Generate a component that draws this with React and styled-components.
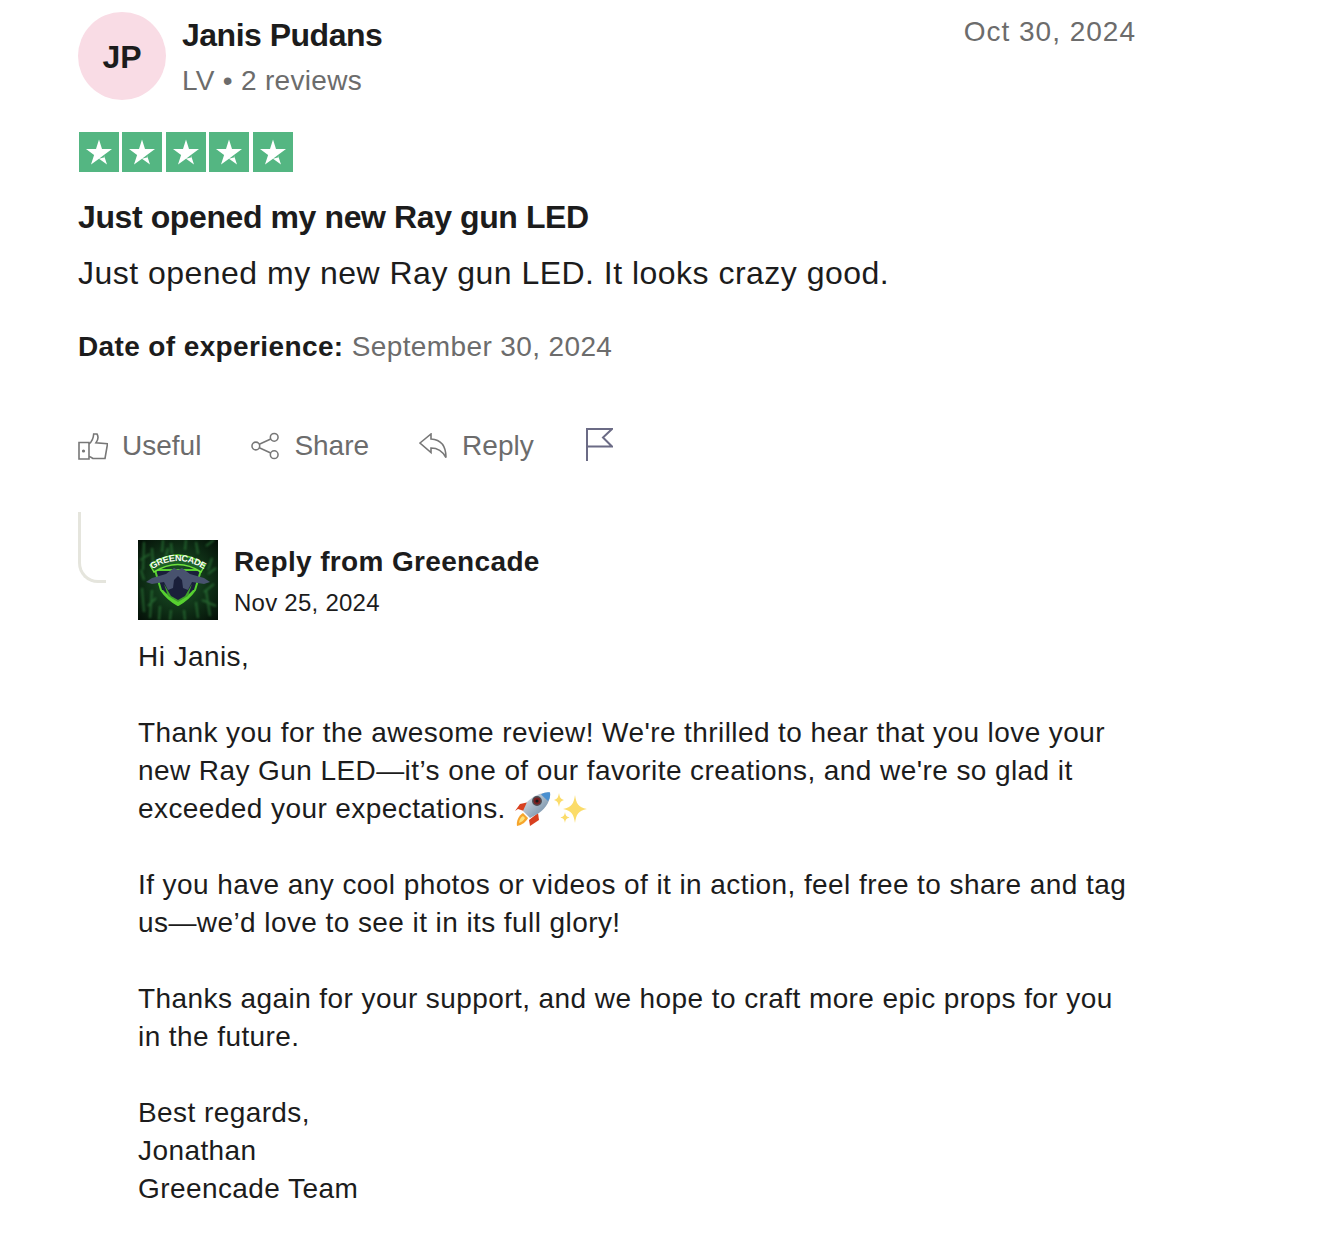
import styled, { createGlobalStyle } from "styled-components";

const GlobalStyle = createGlobalStyle`
  html, body {
    margin: 0;
    padding: 0;
    background: #fff;
    font-family: "Liberation Sans", Arial, sans-serif;
    color: #1c1c1c;
  }
`;

const Page = styled.div`
  width: 1058px;
  padding: 12px 0 0 78px;
`;

const Header = styled.header`
  display: flex;
  align-items: flex-start;
`;

const Avatar = styled.div`
  width: 88px;
  height: 86px;
  padding-top: 2px;
  border-radius: 50%;
  background: #f9dce5;
  display: flex;
  align-items: center;
  justify-content: center;
  font-size: 32px;
  font-weight: 700;
  flex-shrink: 0;
`;

const Consumer = styled.div`
  margin-left: 16px;
  flex: 1;
`;

const Name = styled.div`
  font-size: 32px;
  font-weight: 700;
  line-height: 46px;
  letter-spacing: -0.5px;
`;

const Meta = styled.div`
  font-size: 28px;
  line-height: 46px;
  letter-spacing: 0.3px;
  color: #6c6c6c;
`;

const ReviewDate = styled.div`
  font-size: 28px;
  line-height: 40px;
  letter-spacing: 1px;
  color: #6c6c6c;
`;

const Stars = styled.div`
  display: flex;
  gap: 3.4px;
  margin: 28px 0 0 1px;
`;

const StarBox = styled.div`
  width: 40px;
  height: 40px;
  background: #54b682;
  display: flex;
  align-items: center;
  justify-content: center;
`;

const Title = styled.h2`
  margin: 23px 0 0;
  font-size: 32px;
  line-height: 44px;
  font-weight: 700;
  letter-spacing: -0.4px;
`;

const Body = styled.p`
  margin: 12px 0 0;
  font-size: 32px;
  line-height: 44px;
  letter-spacing: 0.48px;
`;

const Experience = styled.p`
  margin: 32px 0 0;
  font-size: 28px;
  line-height: 40px;
  letter-spacing: 0.38px;
  color: #6c6c6c;

  & b {
    color: #1c1c1c;
  }
`;

const Actions = styled.div`
  display: flex;
  align-items: center;
  margin: 57px 0 0;
  height: 44px;
`;

const Action = styled.div`
  display: flex;
  align-items: center;
  gap: 14px;
  margin-right: 50px;
  font-size: 28px;
  color: #6c6c6c;
`;

const Flag = styled.div`
  display: flex;
  margin: -4px 0 0 2px;
`;

const Reply = styled.section`
  display: flex;
  margin-top: 44px;
`;

const Connector = styled.div`
  width: 25px;
  height: 68px;
  margin-right: 32px;
  border-left: 3px solid #e5e5dd;
  border-bottom: 3px solid #e5e5dd;
  border-bottom-left-radius: 20px;
  flex-shrink: 0;
`;

const ReplyContent = styled.div`
  padding-top: 28px;
  flex: 1;
`;

const ReplyHead = styled.div`
  display: flex;
  gap: 16px;
`;

const ReplyTitle = styled.div`
  font-size: 28px;
  font-weight: 700;
  line-height: 44px;
  letter-spacing: 0.35px;
`;

const ReplyDate = styled.div`
  font-size: 24px;
  line-height: 38px;
  letter-spacing: 0.25px;
`;

const ReplyText = styled.div`
  margin-top: 16px;
  font-size: 28px;
  line-height: 38px;
  letter-spacing: 0.42px;

  & p {
    margin: 0 0 38px;
  }
`;

function Star() {
  return (
    <svg width="32" height="32" viewBox="0 0 32 32">
      <path fill="#fff" d="M16 3.500l3 9.600h10l-8.100 5.900 3.100 9.500-8-5.800-8 5.800 3.100-9.500L3 13.100h10z" />
      <path fill="#54b682" d="M20.900 19l.7 2.200-5.600 1.500z" />
    </svg>
  );
}

function ThumbIcon() {
  return (
    <svg width="30" height="27" viewBox="0 0 30 27" fill="none" stroke="#777" strokeWidth="1.600">
      <path d="M1 9.500h10V26H1z" />
      <path d="M11 11c2.500-2 4.300-4.500 4.700-10L19 1c1.500 2.500 1 6-1 8.800l11.500 1L27 25.500H15c-1.500-1-3-2-4-2" />
      <circle cx="5.500" cy="18" r=".8" fill="#777" />
    </svg>
  );
}

function ShareIcon() {
  return (
    <svg width="29" height="28" viewBox="0 0 30 28" fill="none" stroke="#777" strokeWidth="1.600">
      <circle cx="5" cy="14" r="4" />
      <circle cx="24" cy="5" r="4" />
      <circle cx="24" cy="23" r="4" />
      <path d="M8.600 12.200L20.400 6.800M8.600 15.800l11.800 5.400" />
    </svg>
  );
}

function ReplyIcon() {
  return (
    <svg width="29" height="26" viewBox="0 0 29 26" fill="none" stroke="#777" strokeWidth="1.600">
      <path d="M1 10L12 1v5c8 .5 15 5 15 18.500-3-5.500-7-9.500-15-9.500v4.500z" />
    </svg>
  );
}

function FlagIcon() {
  return (
    <svg width="27" height="33" viewBox="0 0 27 33" fill="none" stroke="#6b6b85" strokeWidth="2">
      <path d="M1 33V1h25l-9 8.500 9 9H1" />
    </svg>
  );
}

const streaks = [
  [6, 2, 5, 30], [14, 8, 15, 24], [25, 0, 24, 12], [33, 3, 34, 14], [48, 0, 47, 10], [58, 2, 60, 14],
  [68, 6, 76, 0], [74, 18, 70, 30], [3, 30, 6, 40], [4, 48, 6, 72], [14, 50, 12, 78], [22, 66, 21, 80],
  [33, 70, 32, 80], [46, 70, 47, 80], [58, 62, 60, 78], [68, 50, 72, 76], [76, 44, 66, 52], [64, 60, 78, 66],
  [30, 8, 28, 16], [70, 34, 78, 28], [2, 20, 12, 14], [10, 66, 18, 58],
];

function GreencadeLogo() {
  return (
    <svg width="80" height="80" viewBox="0 0 80 80" style={{ flexShrink: 0 }}>
      <defs>
        <radialGradient id="matrix" cx="50%" cy="50%" r="70%">
          <stop offset="0" stopColor="#1d5a2a" />
          <stop offset="1" stopColor="#040f07" />
        </radialGradient>
        <filter id="soft">
          <feGaussianBlur stdDeviation="1" />
        </filter>
        <path id="arc" d="M9 33Q40 9 71 33" />
      </defs>
      <rect width="80" height="80" fill="url(#matrix)" />
      <g stroke="#3a9a48" strokeWidth="2" opacity=".5" filter="url(#soft)">
        {streaks.map(([x1, y1, x2, y2], i) => (
          <line key={i} x1={x1} y1={y1} x2={x2} y2={y2} />
        ))}
      </g>
      <path d="M17 30L63 30L57 50Q50 60 40 65Q30 60 23 50Z" fill="#1a1f3a" stroke="#57d030" strokeWidth="2" />
      <path d="M25 50Q31 57 40 61Q49 57 55 50L57 50Q50 60 40 65Q30 60 23 50Z" fill="#57d030" />
      <path d="M26 44L33 56L40 60L47 56L54 44L50 56L40 62L30 56Z" fill="#3f9f2c" />
      <path d="M8 42L14 38L28 34L36 28L40 30L44 28L52 34L66 38L72 42L66 44L54 42L50 50L45 48L44 40L40 36L36 40L35 48L30 50L26 42L14 44Z" fill="#48526e" />
      <path d="M12 25Q40 5 67 25L63 32Q40 17 16 32Z" fill="#1c5f28" stroke="#6de03c" strokeWidth="1.500" />
      <text fontFamily="Liberation Sans, sans-serif" fontSize="9" fontWeight="700" fill="#f6fbf2" letterSpacing="-.3">
        <textPath href="#arc" startOffset="50%" textAnchor="middle">GREENCADE</textPath>
      </text>
    </svg>
  );
}

function RocketEmoji() {
  return (
    <svg width="74" height="36" viewBox="0 0 74 36" style={{ verticalAlign: "-9px" }} role="img" aria-label="rocket and sparkles">
      <defs>
        <linearGradient id="hull" x1="0" y1="0" x2="1" y2="1">
          <stop offset="0" stopColor="#e4e8ec" />
          <stop offset="1" stopColor="#5f7f9c" />
        </linearGradient>
      </defs>
      <path d="M1 20l5-7 9-2-5 9-6-2z" fill="#d8401f" />
      <path d="M16 35l-1-6 9-7 1 7z" fill="#d8401f" />
      <path d="M3 35c-1-5 2-11 6-13l5 5c-2 4-6 7-11 8z" fill="#f6a52c" />
      <path d="M5 32c0-3 2-6 4-7l2 2c-1 2-3 4-6 5z" fill="#fde27a" />
      <path d="M36 1.500c1 7.500-4 15.500-11 20.500l-9 5-7-7 4-9C19 5 27 1 36 1.500z" fill="url(#hull)" />
      <path d="M36 1.500c-3-.5-6 0-9 2l7 6.500c2-2.500 2.500-6 2-8.500z" fill="#4a90d0" />
      <circle cx="23" cy="10" r="4.200" fill="#7a1f1f" stroke="#4f4f55" strokeWidth="1.500" />
      <circle cx="23" cy="10" r="1.600" fill="#1a1a1a" />
      <path d="M45 2c.8 4.500 1.500 6 5 7-3.500 1-4.200 2.500-5 7-.8-4.500-1.500-6-5-7 3.500-1 4.200-2.500 5-7zM61 4c1.300 8.500 3 12 12 14-9 2-10.700 5.500-12 14-1.300-8.500-3-12-12-14 9-2 10.700-5.500 12-14zM51 21c.6 3.500 1.300 4.500 4.500 5.500-3.200 1-3.900 2-4.500 5.500-.6-3.500-1.300-4.500-4.500-5.500 3.200-1 3.900-2 4.500-5.500z" fill="#fbdc6a" />
    </svg>
  );
}

export default function App() {
  return (
    <>
      <GlobalStyle />
      <Page>
        <Header>
          <Avatar>JP</Avatar>
          <Consumer>
            <Name>Janis Pudans</Name>
            <Meta>LV • 2 reviews</Meta>
          </Consumer>
          <ReviewDate>Oct 30, 2024</ReviewDate>
        </Header>

        <Stars>
          {[0, 1, 2, 3, 4].map((i) => (
            <StarBox key={i}>
              <Star />
            </StarBox>
          ))}
        </Stars>

        <Title>Just opened my new Ray gun LED</Title>
        <Body>Just opened my new Ray gun LED. It looks crazy good.</Body>
        <Experience>
          <b>Date of experience:</b> September 30, 2024
        </Experience>

        <Actions>
          <Action>
            <ThumbIcon />
            Useful
          </Action>
          <Action>
            <ShareIcon />
            Share
          </Action>
          <Action>
            <ReplyIcon />
            Reply
          </Action>
          <Flag>
            <FlagIcon />
          </Flag>
        </Actions>

        <Reply>
          <Connector />
          <ReplyContent>
            <ReplyHead>
              <GreencadeLogo />
              <div>
                <ReplyTitle>Reply from Greencade</ReplyTitle>
                <ReplyDate>Nov 25, 2024</ReplyDate>
              </div>
            </ReplyHead>
            <ReplyText>
              <p>Hi Janis,</p>
              <p>
                Thank you for the awesome review! We're thrilled to hear that you love your
                <br />
                new Ray Gun LED—it’s one of our favorite creations, and we're so glad it
                <br />
                exceeded your expectations. <RocketEmoji />
              </p>
              <p>
                If you have any cool photos or videos of it in action, feel free to share and tag
                <br />
                us—we’d love to see it in its full glory!
              </p>
              <p>
                Thanks again for your support, and we hope to craft more epic props for you
                <br />
                in the future.
              </p>
              <p>
                Best regards,
                <br />
                Jonathan
                <br />
                Greencade Team
              </p>
            </ReplyText>
          </ReplyContent>
        </Reply>
      </Page>
    </>
  );
}
